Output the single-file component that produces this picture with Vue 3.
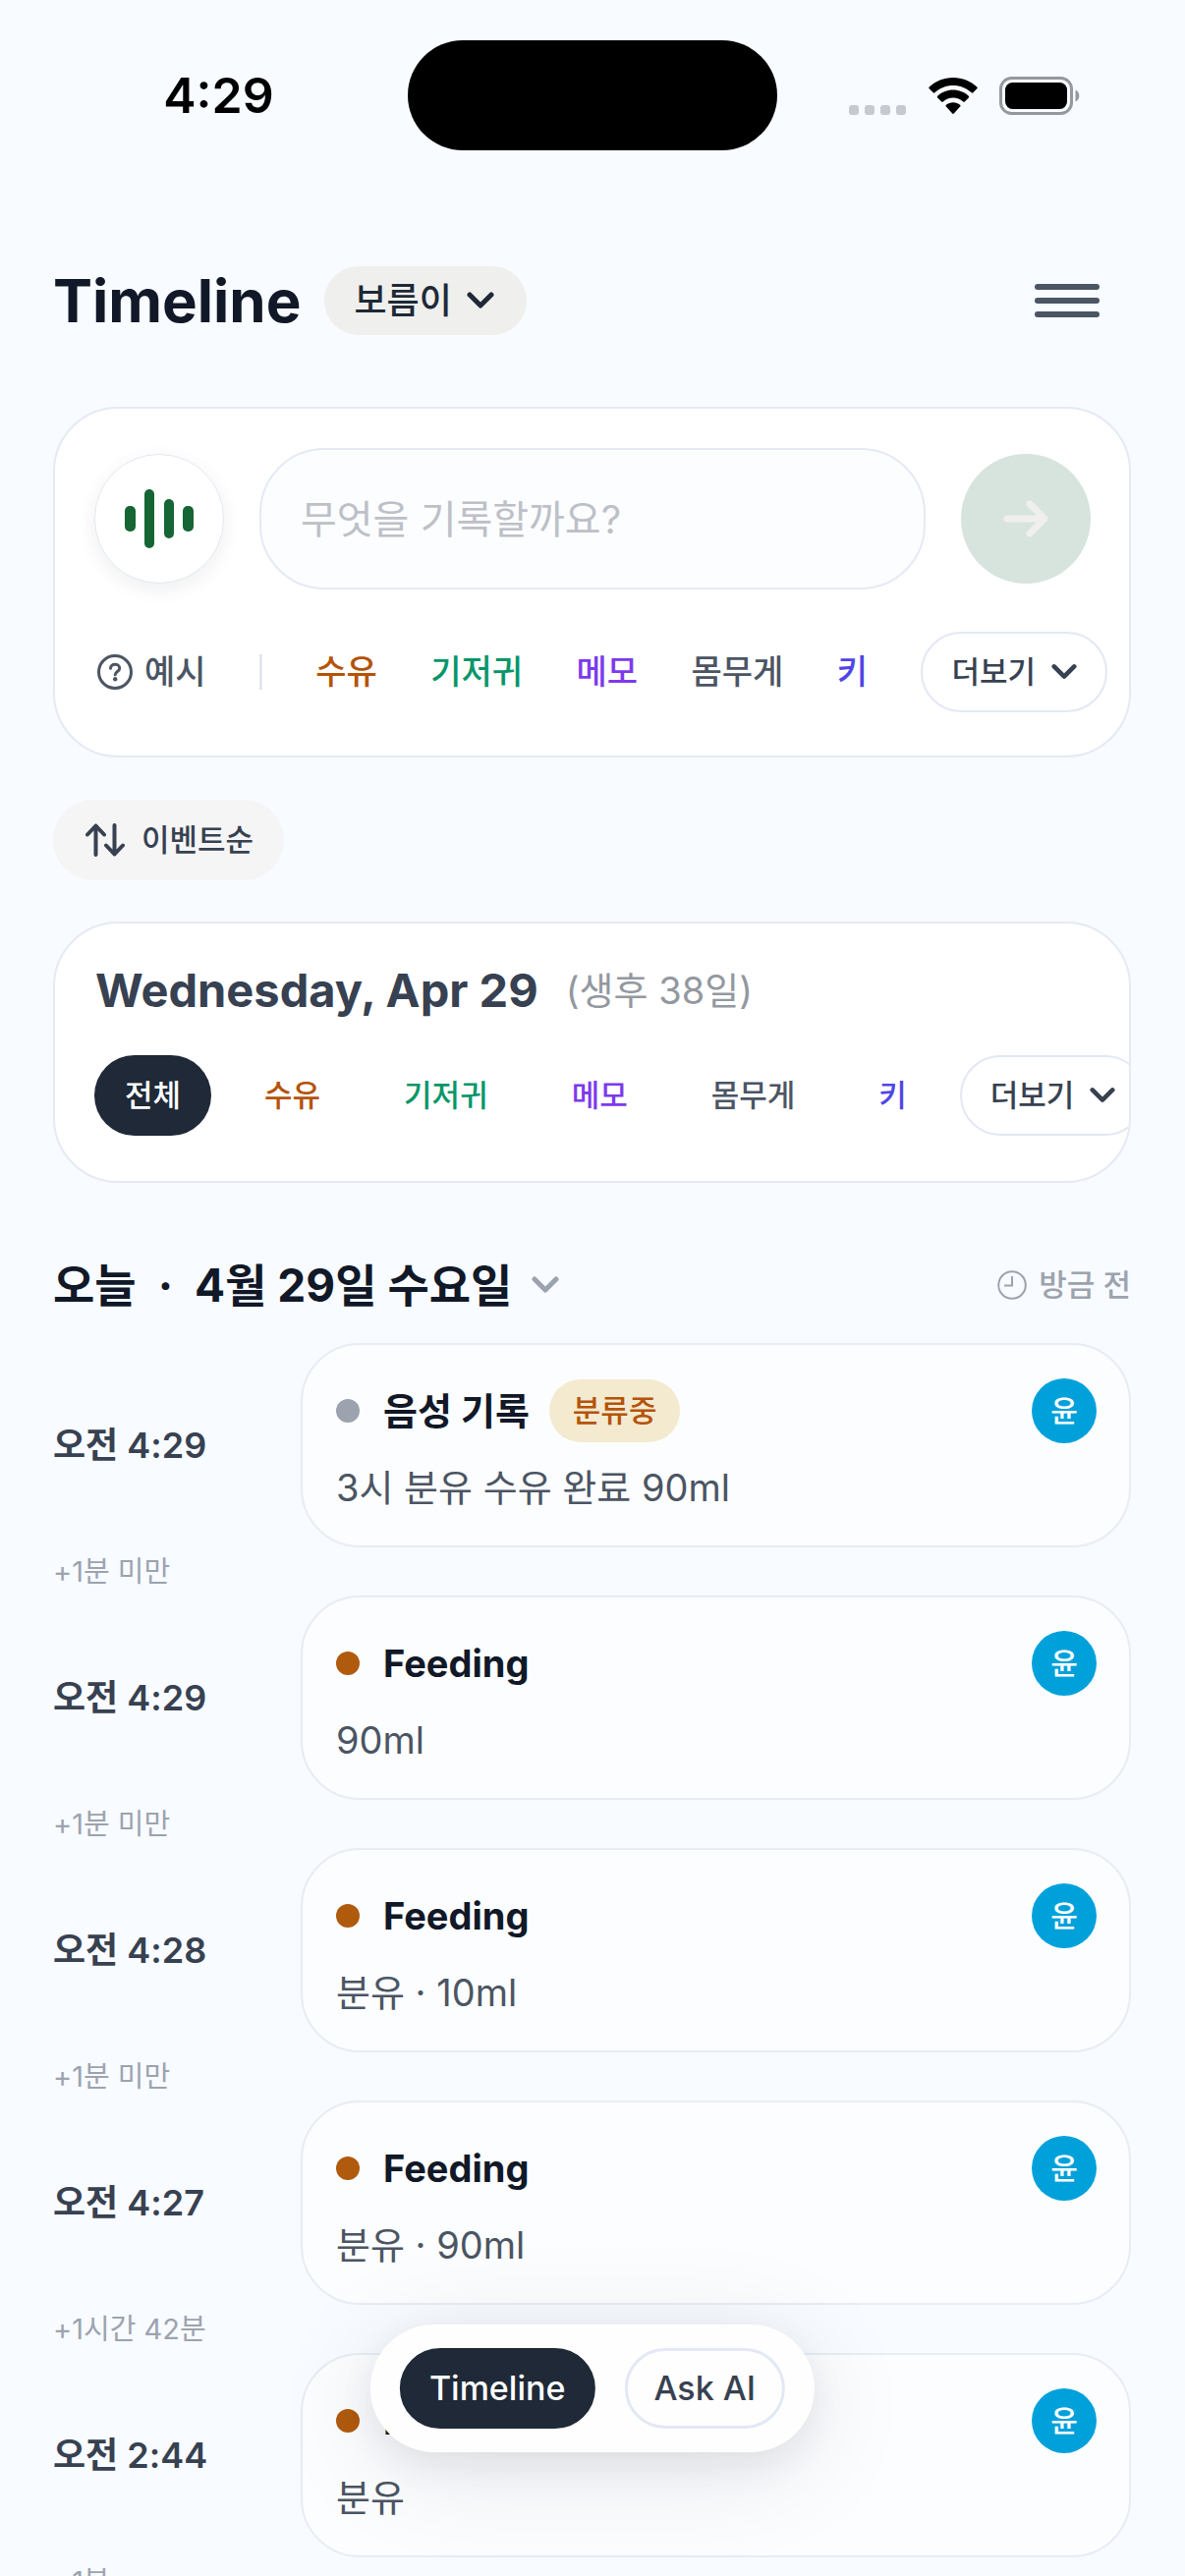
<template>
  <div class="app">
    <!-- 상태 표시줄 -->
    <div class="status-bar">
      <div class="status-side">
        <span class="clock">4:29</span>
      </div>
      <div class="island"></div>
      <div class="status-side icons">
        <div class="signal"><i v-for="n in 4" :key="n"></i></div>
        <svg class="wifi" viewBox="0 0 50 37">
          <path
            d="M25 0C15.500 0 7 3.600 .7 9.500a1.200 1.200 0 0 0 0 1.700l4 4.100a1.200 1.200 0 0 0 1.600 0C11.300 10.700 17.800 8 25 8s13.700 2.700 18.700 7.300a1.200 1.200 0 0 0 1.600 0l4-4.100a1.200 1.200 0 0 0 0-1.700C43 3.600 34.500 0 25 0z"
          />
          <path
            d="M25 12.600c-6.100 0-11.600 2.300-15.800 6.100a1.200 1.200 0 0 0 0 1.700l4 4.100a1.200 1.200 0 0 0 1.600 0A15 15 0 0 1 25 20.400a15 15 0 0 1 10.200 4.100 1.200 1.200 0 0 0 1.600 0l4-4.100a1.200 1.200 0 0 0 0-1.700C36.600 14.900 31.100 12.600 25 12.600z"
          />
          <path
            d="M25 25.200c-2.700 0-5.200 1-7.100 2.600a1.200 1.200 0 0 0 0 1.700l6.300 7a1.100 1.100 0 0 0 1.600 0l6.300-7a1.200 1.200 0 0 0 0-1.700c-1.900-1.600-4.400-2.600-7.100-2.600z"
          />
        </svg>
        <svg class="battery" viewBox="0 0 82 39">
          <rect x="1.500" y="1.500" width="72" height="36" rx="11" fill="none" stroke="#95989c" stroke-width="3" />
          <rect x="6" y="6" width="63" height="27" rx="7.500" />
          <path d="M77.500 13.500v12c2.300-1 3.800-3.300 3.800-6s-1.500-5-3.800-6z" fill="#95989c" />
        </svg>
      </div>
    </div>

    <header class="header">
      <h1>Timeline</h1>
      <div class="baby">
        <select aria-label="아기 선택">
          <option>보름이</option>
        </select>
        <svg class="chevron" viewBox="0 0 28 18"><path d="M3 3l11 11L25 3" /></svg>
      </div>
      <button class="menu" type="button" aria-label="메뉴">
        <i></i>
        <i></i>
        <i></i>
      </button>
    </header>

    <main>
      <!-- 기록 입력 -->
      <section class="card record">
        <div class="record-row">
          <button class="voice" type="button" aria-label="음성 기록">
            <svg viewBox="0 0 70 60">
              <rect x="0" y="17" width="11" height="26" rx="5" />
              <rect x="20" y="0" width="10" height="60" rx="5" />
              <rect x="40" y="10" width="10" height="40" rx="5" />
              <rect x="59" y="17" width="11" height="26" rx="5" />
            </svg>
          </button>
          <input v-model="text" type="text" aria-label="기록" placeholder="무엇을 기록할까요?" />
          <button class="send" type="button" aria-label="보내기">
            <svg viewBox="0 0 46 38">
              <path d="M4 19h38M27 4l15 15-15 15" />
            </svg>
          </button>
        </div>
        <div class="example-row">
          <button class="help" type="button">
            <svg viewBox="0 0 36 36">
              <circle cx="18" cy="18" r="16.500" />
              <path d="M13.500 14.300c0-2.400 2-4 4.600-4s4.600 1.600 4.600 3.900c0 3.200-4.500 3.400-4.500 6.600" />
              <circle class="point" cx="18.200" cy="25.200" r="2.200" />
            </svg>
            예시
          </button>
          <span class="divider"></span>
          <button
            v-for="item in categories"
            :key="item.key"
            class="word"
            :class="item.key"
            type="button"
          >
            {{ item.label }}
          </button>
          <button class="chip more" type="button">
            더보기
            <svg class="chevron" viewBox="0 0 28 18"><path d="M3 3l11 11L25 3" /></svg>
          </button>
        </div>
      </section>

      <button class="sort" type="button">
        <svg viewBox="0 0 40 34">
          <path d="M10.500 32V2.500M2 11.500l8.500-9 8.500 9M29.500 2v29.500M21 22.500l8.500 9 8.500-9" />
        </svg>
        이벤트순
      </button>

      <!-- 날짜 / 필터 -->
      <section class="card filter">
        <div class="filter-head">
          <h2>Wednesday, Apr 29</h2>
          <span>(생후 38일)</span>
        </div>
        <div class="chips">
          <button class="chip" :class="{ active: filter === 'all' }" type="button" @click="filter = 'all'">
            전체
          </button>
          <button
            v-for="item in categories"
            :key="item.key"
            class="chip"
            :class="[item.key, { active: filter === item.key }]"
            type="button"
            @click="filter = item.key"
          >
            {{ item.label }}
          </button>
          <button class="chip more" type="button">
            더보기
            <svg class="chevron" viewBox="0 0 28 18"><path d="M3 3l11 11L25 3" /></svg>
          </button>
        </div>
      </section>

      <!-- 타임라인 -->
      <section class="timeline">
        <div class="day">
          <h2>
            <span>오늘</span>
            <span>·</span>
            <span>4월 29일 수요일</span>
          </h2>
          <svg class="chevron" viewBox="0 0 28 18"><path d="M3 3l11 11L25 3" /></svg>
          <div class="ago">
            <svg viewBox="0 0 30 30">
              <circle cx="15" cy="15" r="13.800" />
              <path d="M15 6v9.500H7" />
            </svg>
            방금 전
          </div>
        </div>
        <ul>
          <li v-for="item in records" :key="item.id">
            <div class="record-line">
              <time>{{ item.time }}</time>
              <article class="entry">
                <div class="entry-head">
                  <span class="dot" :class="{ voiced: item.badge }"></span>
                  <h3>{{ item.title }}</h3>
                  <span v-if="item.badge" class="badge">{{ item.badge }}</span>
                  <span class="avatar">윤</span>
                </div>
                <p>{{ item.detail }}</p>
              </article>
            </div>
            <div class="interval">{{ item.interval }}</div>
          </li>
        </ul>
      </section>
    </main>

    <nav class="tabs">
      <button :class="{ on: tab === 'timeline' }" type="button" @click="tab = 'timeline'">Timeline</button>
      <button :class="{ on: tab === 'ai' }" type="button" @click="tab = 'ai'">Ask AI</button>
    </nav>
  </div>
</template>

<script setup>
import { ref } from "vue";

const text = ref("");
const filter = ref("all");
const tab = ref("timeline");

const categories = [
  { key: "feeding", label: "수유" },
  { key: "diaper", label: "기저귀" },
  { key: "memo", label: "메모" },
  { key: "weight", label: "몸무게" },
  { key: "height", label: "키" },
];

const records = ref([
  { id: 1, time: "오전 4:29", title: "음성 기록", badge: "분류중", detail: "3시 분유 수유 완료 90ml", interval: "+1분 미만" },
  { id: 2, time: "오전 4:29", title: "Feeding", detail: "90ml", interval: "+1분 미만" },
  { id: 3, time: "오전 4:28", title: "Feeding", detail: "분유 · 10ml", interval: "+1분 미만" },
  { id: 4, time: "오전 4:27", title: "Feeding", detail: "분유 · 90ml", interval: "+1시간 42분" },
  { id: 5, time: "오전 2:44", title: "Feeding", detail: "분유", interval: "+1분" },
]);
</script>

<style>
body {
  margin: 0;
  background: #f8fbff;
}
</style>

<style scoped>
* {
  box-sizing: border-box;
}
.app {
  position: relative;
  height: 100vh;
  overflow: hidden;
  background: #f8fbff;
  color: #111827;
  font-family: Inter, "Noto Sans CJK KR", sans-serif;
  line-height: 40px;
}
h1,
h2,
h3,
p,
ul {
  margin: 0;
  padding: 0;
}
ul {
  list-style: none;
}
button,
input,
select {
  margin: 0;
  padding: 0;
  border: none;
  background: none;
  color: inherit;
  font: inherit;
}
button {
  flex-shrink: 0;
  white-space: nowrap;
  cursor: pointer;
}
svg {
  display: block;
  flex-shrink: 0;
}
.chevron {
  width: 28px;
  height: 18px;
  fill: none;
  stroke: currentColor;
  stroke-width: 5;
  stroke-linecap: round;
  stroke-linejoin: round;
}

/* 상태 표시줄 */
.status-bar {
  display: grid;
  grid-template-columns: 1fr 376px 1fr;
  align-items: center;
  height: 194px;
  color: #000;
}
.status-side {
  display: flex;
  align-items: center;
  justify-content: center;
}
.status-side.icons {
  padding-right: 34px;
}
.clock {
  padding-left: 30px;
  font-size: 50px;
  font-weight: 600;
  line-height: 60px;
}
.island {
  height: 112px;
  border-radius: 56px;
  background: #000;
}
.signal {
  display: flex;
  align-self: flex-end;
  gap: 6px;
  margin-right: 23px;
}
.signal i {
  width: 10px;
  height: 10px;
  border-radius: 3px;
  background: #c8c9d0;
}
.wifi {
  width: 50px;
  height: 37px;
}
.battery {
  width: 82px;
  height: 39px;
  margin-left: 22px;
}

/* 헤더 */
.header {
  display: flex;
  align-items: center;
  height: 70px;
  margin: 77px 87px 73px 54px;
}
.header h1 {
  font-size: 60px;
  font-weight: 700;
  line-height: 70px;
}
.baby {
  display: grid;
  align-items: center;
  margin-left: 24px;
  border-radius: 35px;
  background: #efefed;
  color: #1f2937;
}
.baby select,
.baby svg {
  grid-area: 1 / 1;
}
.baby select {
  height: 70px;
  padding: 0 76px 0 30px;
  appearance: none;
  font-size: 36px;
  font-weight: 500;
}
.baby svg {
  justify-self: end;
  margin-right: 33px;
  pointer-events: none;
}
.menu {
  display: flex;
  flex-direction: column;
  gap: 8px;
  margin-left: auto;
}
.menu i {
  width: 66px;
  height: 6px;
  border-radius: 3px;
  background: #4b5563;
}

main {
  padding: 0 55px 0 54px;
}
.card {
  border: 2px solid #e4eaf4;
  border-radius: 66px;
  background: #fff;
  overflow: hidden;
}

/* 기록 입력 */
.record {
  padding: 40px 22px 44px 40px;
}
.record-row {
  display: flex;
  align-items: center;
  gap: 36px;
  padding-right: 17px;
}
.voice,
.send {
  display: flex;
  align-items: center;
  justify-content: center;
  width: 132px;
  height: 132px;
  border-radius: 50%;
}
.voice {
  border: 1px solid #e2e8f0;
  background: #fff;
  box-shadow: 0 6px 20px rgba(15, 23, 42, 0.07);
}
.voice svg {
  width: 70px;
  height: 60px;
  fill: #166534;
}
.record-row input {
  flex: 1;
  min-width: 0;
  height: 144px;
  padding: 0 40px;
  border: 2px solid #e4eaf4;
  border-radius: 66px;
  background: #fcfdff;
  font-size: 40px;
}
.record-row input::placeholder {
  color: #bdc0c7;
  opacity: 1;
}
.send {
  background: #d7e4de;
}
.send svg {
  width: 46px;
  height: 38px;
  fill: none;
  stroke: #efefed;
  stroke-width: 7;
  stroke-linecap: round;
  stroke-linejoin: round;
}
.example-row {
  display: flex;
  align-items: center;
  justify-content: space-between;
  margin-top: 43px;
  color: #4b5563;
  font-size: 34px;
  font-weight: 500;
}
.help {
  display: flex;
  align-items: center;
  gap: 12px;
  padding-left: 3px;
}
.help svg {
  width: 36px;
  height: 36px;
  fill: none;
  stroke: currentColor;
  stroke-width: 3;
  stroke-linecap: round;
}
.help .point {
  fill: currentColor;
  stroke: none;
}
.divider {
  width: 3px;
  height: 36px;
  background: #e2e8f0;
}
.feeding {
  color: #b45309;
}
.diaper {
  color: #059669;
}
.memo {
  color: #7c3aed;
}
.weight {
  color: #4b5563;
}
.height {
  color: #4f46e5;
}
.chip {
  height: 82px;
  padding: 0 30px;
  border: 1px solid transparent;
  border-radius: 41px;
  font-size: 31px;
  font-weight: 500;
}
.chip.active {
  background: #1f2937;
  color: #fff;
}
.chip.more {
  display: flex;
  align-items: center;
  gap: 16px;
  padding: 0 29px;
  border: 2px solid #e2e8f4;
  color: #374151;
}
.more .chevron {
  width: 26px;
}

/* 정렬 */
.sort {
  display: flex;
  align-items: center;
  gap: 17px;
  height: 82px;
  margin: 43px 0 42px;
  padding: 0 31px 0 33px;
  border-radius: 41px;
  background: #f5f5f5;
  color: #374151;
  font-size: 31px;
  font-weight: 500;
}
.sort svg {
  width: 40px;
  height: 34px;
  fill: none;
  stroke: currentColor;
  stroke-width: 4;
  stroke-linecap: round;
  stroke-linejoin: round;
}

/* 필터 */
.filter {
  padding: 38px 0 46px 40px;
}
.filter-head {
  display: flex;
  align-items: center;
  gap: 28px;
  margin-left: 1px;
}
.filter-head h2 {
  color: #374151;
  font-size: 47px;
  font-weight: 700;
  line-height: 60px;
}
.filter-head span {
  color: #93989f;
  font-size: 38px;
  line-height: 60px;
}
.chips {
  display: flex;
  gap: 23px;
  margin-top: 36px;
}

/* 타임라인 */
.day {
  display: flex;
  align-items: center;
  height: 60px;
  margin: 74px 0 29px;
}
.day h2 {
  display: flex;
  gap: 22px;
  font-size: 46px;
  font-weight: 700;
  line-height: 60px;
}
.day > .chevron {
  margin-left: 20px;
  color: #9ca3af;
}
.ago {
  display: flex;
  align-items: center;
  gap: 12px;
  margin-left: auto;
  color: #9ca3af;
  font-size: 31px;
  font-weight: 500;
}
.ago svg {
  width: 30px;
  height: 30px;
  fill: none;
  stroke: currentColor;
  stroke-width: 2;
}
.record-line {
  display: flex;
  align-items: center;
}
time {
  width: 252px;
  flex-shrink: 0;
  color: #374151;
  font-size: 36px;
  font-weight: 600;
}
.entry {
  flex: 1;
  height: 208px;
  padding: 34px 33px 0 34px;
  border: 2px solid #e7ecf5;
  border-radius: 60px;
  background: #fcfdff;
}
.entry-head {
  display: flex;
  align-items: center;
  height: 66px;
}
.entry h3 {
  margin-left: 24px;
  font-size: 38px;
  font-weight: 700;
}
.dot {
  width: 24px;
  height: 24px;
  border-radius: 50%;
  background: #b05a0e;
}
.dot.voiced {
  background: #9ca3af;
}
.badge {
  margin-left: 20px;
  padding: 0 24px;
  border-radius: 32px;
  background: #f3ead0;
  color: #b45309;
  font-size: 31px;
  font-weight: 500;
  line-height: 64px;
}
.avatar {
  width: 66px;
  height: 66px;
  margin-left: auto;
  border-radius: 50%;
  background: #00a1db;
  color: #fff;
  font-size: 30px;
  font-weight: 500;
  line-height: 66px;
  text-align: center;
}
.entry p {
  margin-top: 18px;
  color: #4b5563;
  font-size: 38px;
  line-height: 54px;
}
.interval {
  color: #9ca3af;
  font-size: 29px;
  line-height: 49px;
}

/* 하단 탭 */
.tabs {
  position: absolute;
  bottom: 126px;
  left: 50%;
  display: flex;
  gap: 30px;
  padding: 24px 30px;
  border-radius: 65px;
  background: #fefefe;
  box-shadow: 0 16px 110px rgba(15, 23, 42, 0.1), 0 12px 36px rgba(15, 23, 42, 0.07);
  transform: translateX(-50%);
}
.tabs button {
  height: 82px;
  padding: 0 27px;
  border: 3px solid #e2e8f4;
  border-radius: 41px;
  color: #374151;
  font-size: 34px;
  font-weight: 500;
}
.tabs .on {
  border-color: #1f2937;
  background: #1f2937;
  color: #fff;
}
</style>
